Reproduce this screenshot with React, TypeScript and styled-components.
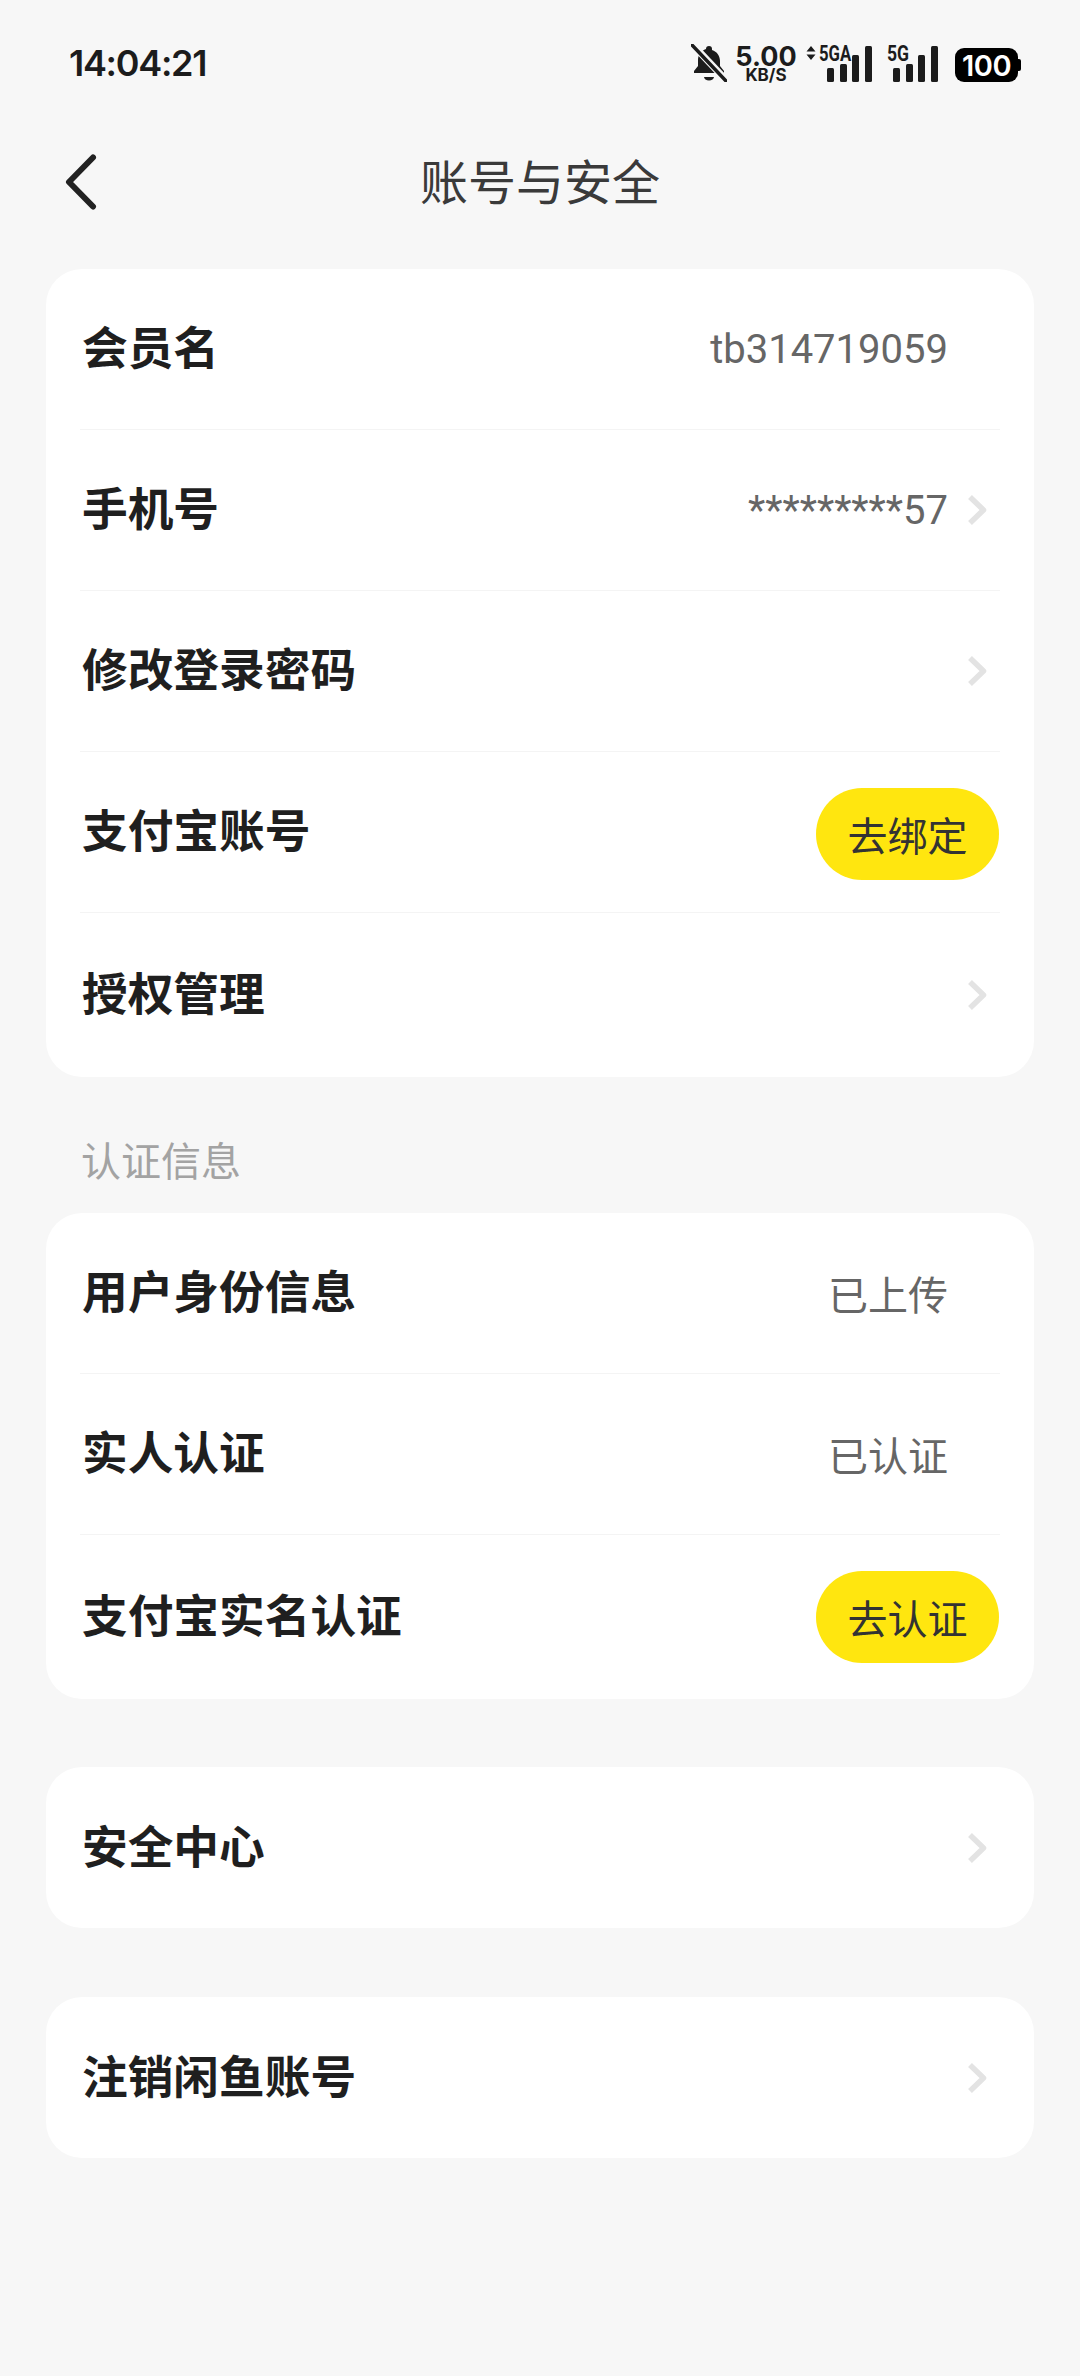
import styled, { createGlobalStyle } from 'styled-components'

const GlobalStyle = createGlobalStyle`
  html, body {
    margin: 0;
    padding: 0;
    background: #f7f7f7;
  }
  body {
    font-family: 'Noto Sans CJK SC', Roboto, sans-serif;
  }
`

const Page = styled.div`
  width: 1080px;
  height: 2376px;
  overflow: hidden;
  background: #f7f7f7;
`

const StatusBar = styled.div`
  height: 126px;
  box-sizing: border-box;
  padding: 0 62px 0 69px;
  display: flex;
  align-items: center;
  justify-content: space-between;
`

const Clock = styled.div`
  font-family: Inter, sans-serif;
  font-weight: 600;
  font-size: 36px;
  letter-spacing: -1.3px;
  color: #1c1c1c;
`

const StatusIcons = styled.div`
  display: flex;
  align-items: center;
  height: 40px;
`

const NetSpeed = styled.div`
  width: 60px;
  margin: 3px 0 0 9px;
  display: flex;
  flex-direction: column;
  align-items: center;
  font-family: Inter, sans-serif;
  font-weight: 700;
  color: #1c1c1c;
`

const SpeedValue = styled.span`
  font-size: 27px;
  line-height: 22px;
`

const SpeedUnit = styled.span`
  font-size: 17px;
  line-height: 15px;
`

const Signal = styled.div<{ $width: number; $gap: number }>`
  position: relative;
  width: ${(p) => p.$width}px;
  height: 40px;
  margin-left: ${(p) => p.$gap}px;
`

const SignalLabel = styled.span<{ $left: number; $squeeze: number }>`
  position: absolute;
  left: ${(p) => p.$left}px;
  top: 0;
  font-family: Roboto, sans-serif;
  font-weight: 700;
  font-size: 22px;
  line-height: 22px;
  transform: scaleX(${(p) => p.$squeeze});
  transform-origin: left center;
  color: #1c1c1c;
`

const SignalBars = styled.svg`
  position: absolute;
  right: 0;
  top: 3px;
`

const Arrows = styled.svg`
  position: absolute;
  left: 0;
  top: 2px;
`

const Battery = styled.div`
  position: relative;
  width: 63px;
  height: 34px;
  margin: 4px 0 0 17px;
  border-radius: 9px;
  background: #000;
  color: #fff;
  display: flex;
  align-items: center;
  justify-content: center;
  font-family: Inter, sans-serif;
  font-weight: 600;
  font-size: 29px;
  letter-spacing: -0.5px;

  &::after {
    content: '';
    position: absolute;
    right: -3px;
    top: 11px;
    width: 3px;
    height: 12px;
    border-radius: 0 2px 2px 0;
    background: #000;
  }
`

const Header = styled.div`
  height: 112px;
  display: grid;
  grid-template-columns: 1fr auto 1fr;
  align-items: center;
  margin-bottom: 31px;
`

const BackButton = styled.div`
  padding-left: 65px;
  display: flex;
  align-items: center;
`

const Title = styled.div`
  font-size: 48px;
  font-weight: 400;
  color: #3a3a3a;
  padding-bottom: 6px;
`

const Content = styled.div`
  padding: 0 46px;
`

const Card = styled.div<{ $gap?: number }>`
  background: #fff;
  border-radius: 36px;
  padding: 0 34px;
  margin-bottom: ${(p) => p.$gap ?? 0}px;
`

const Row = styled.div`
  height: 161px;
  box-sizing: border-box;
  display: flex;
  align-items: center;
  justify-content: space-between;
  border-bottom: 1px solid #f4f4f4;

  &:last-child {
    border-bottom: none;
  }

  &:last-child:not(:first-child) {
    height: 163.5px;
  }
`

const Label = styled.div`
  font-size: 45.7px;
  font-weight: 700;
  color: #1f1f1f;
  margin-left: 2px;
  padding-bottom: 8px;
`

const Right = styled.div`
  display: flex;
  align-items: center;
`

const Value = styled.div`
  font-family: Roboto, 'Noto Sans CJK SC', sans-serif;
  font-size: 40px;
  font-weight: 400;
  color: #666;
`

const ChevronSlot = styled.div`
  width: 52px;
  height: 40px;
  display: flex;
  align-items: center;
  justify-content: flex-end;
  padding-right: 13px;
  box-sizing: border-box;
`

const ActionButton = styled.div<{ $drop?: number }>`
  width: 183px;
  height: 92px;
  margin: ${(p) => p.$drop ?? 0}px 1px 0 0;
  border-radius: 46px;
  background: #ffe60f;
  display: flex;
  align-items: center;
  justify-content: center;
  font-size: 40px;
  color: #333;
`

const SectionLabel = styled.div`
  font-size: 40px;
  color: #a3a3a3;
  padding-left: 35px;
  height: 136.5px;
  box-sizing: border-box;
  padding-top: 55px;
  line-height: 54px;
`

const Chevron = () => (
  <svg width="20" height="32" viewBox="0 0 20 32" fill="none">
    <path d="M3 3 L16.500 16 L3 29" stroke="#e3e3e3" strokeWidth="5.500" strokeLinejoin="round" />
  </svg>
)

const Back = () => (
  <svg width="32" height="56" viewBox="0 0 32 56" fill="none">
    <path d="M28 3.500 L4 28 L28 52.500" stroke="#222" strokeWidth="6" strokeLinecap="round" strokeLinejoin="round" />
  </svg>
)

const MutedBell = () => (
  <svg width="36" height="38" viewBox="0 0 36 38">
    <path
      d="M18 2a3 3 0 0 1 3 3v1c5 1.500 8 6 8 11v5l4 5v2H3v-2l4-5v-6c0-5 3-9.500 8-11V5a3 3 0 0 1 3-3z"
      fill="#1c1c1c"
    />
    <path d="M13 33h10a5 3.500 0 0 1-10 0z" fill="#1c1c1c" />
    <path d="M1 0 L35 36" stroke="#f7f7f7" strokeWidth="7" />
    <path d="M1 1 L35 37" stroke="#1c1c1c" strokeWidth="3.500" strokeLinecap="round" />
  </svg>
)

const Bars = () => (
  <SignalBars width="45" height="36" viewBox="0 0 45 36">
    <rect x="0" y="22" width="7" height="14" rx="1.500" fill="#1c1c1c" />
    <rect x="13" y="18" width="7" height="18" rx="1.500" fill="#1c1c1c" />
    <rect x="25" y="9" width="7" height="27" rx="1.500" fill="#1c1c1c" />
    <rect x="38" y="0" width="7" height="36" rx="1.500" fill="#1c1c1c" />
  </SignalBars>
)

type Item = {
  label: string
  value?: string
  chevron?: boolean
  action?: string
  drop?: number
}

const accountRows: Item[] = [
  { label: '会员名', value: 'tb314719059' },
  { label: '手机号', value: '*********57', chevron: true },
  { label: '修改登录密码', chevron: true },
  { label: '支付宝账号', action: '去绑定', drop: 4 },
  { label: '授权管理', chevron: true },
]

const authRows: Item[] = [
  { label: '用户身份信息', value: '已上传' },
  { label: '实人认证', value: '已认证' },
  { label: '支付宝实名认证', action: '去认证' },
]

const SettingRow = ({ item }: { item: Item }) => (
  <Row>
    <Label>{item.label}</Label>
    {item.action ? (
      <ActionButton $drop={item.drop}>{item.action}</ActionButton>
    ) : (
      <Right>
        {item.value && <Value>{item.value}</Value>}
        <ChevronSlot>{item.chevron && <Chevron />}</ChevronSlot>
      </Right>
    )}
  </Row>
)

const App = () => (
  <Page>
    <GlobalStyle />
    <StatusBar>
      <Clock>14:04:21</Clock>
      <StatusIcons>
        <MutedBell />
        <NetSpeed>
          <SpeedValue>5.00</SpeedValue>
          <SpeedUnit>KB/S</SpeedUnit>
        </NetSpeed>
        <Signal $width={66} $gap={10}>
          <Arrows width="10" height="16" viewBox="0 0 10 16">
            <path d="M5 1 L9.500 6.500 H0.500 Z M5 15 L9.500 9.500 H0.500 Z" fill="#1c1c1c" />
          </Arrows>
          <SignalLabel $left={13} $squeeze={0.76}>5GA</SignalLabel>
          <Bars />
        </Signal>
        <Signal $width={51} $gap={15}>
          <SignalLabel $left={0} $squeeze={0.8}>5G</SignalLabel>
          <Bars />
        </Signal>
        <Battery>100</Battery>
      </StatusIcons>
    </StatusBar>
    <Header>
      <BackButton>
        <Back />
      </BackButton>
      <Title>账号与安全</Title>
    </Header>
    <Content>
      <Card>
        {accountRows.map((item) => (
          <SettingRow key={item.label} item={item} />
        ))}
      </Card>
      <SectionLabel>认证信息</SectionLabel>
      <Card $gap={68.5}>
        {authRows.map((item) => (
          <SettingRow key={item.label} item={item} />
        ))}
      </Card>
      <Card $gap={69}>
        <SettingRow item={{ label: '安全中心', chevron: true }} />
      </Card>
      <Card>
        <SettingRow item={{ label: '注销闲鱼账号', chevron: true }} />
      </Card>
    </Content>
  </Page>
)

export default App
